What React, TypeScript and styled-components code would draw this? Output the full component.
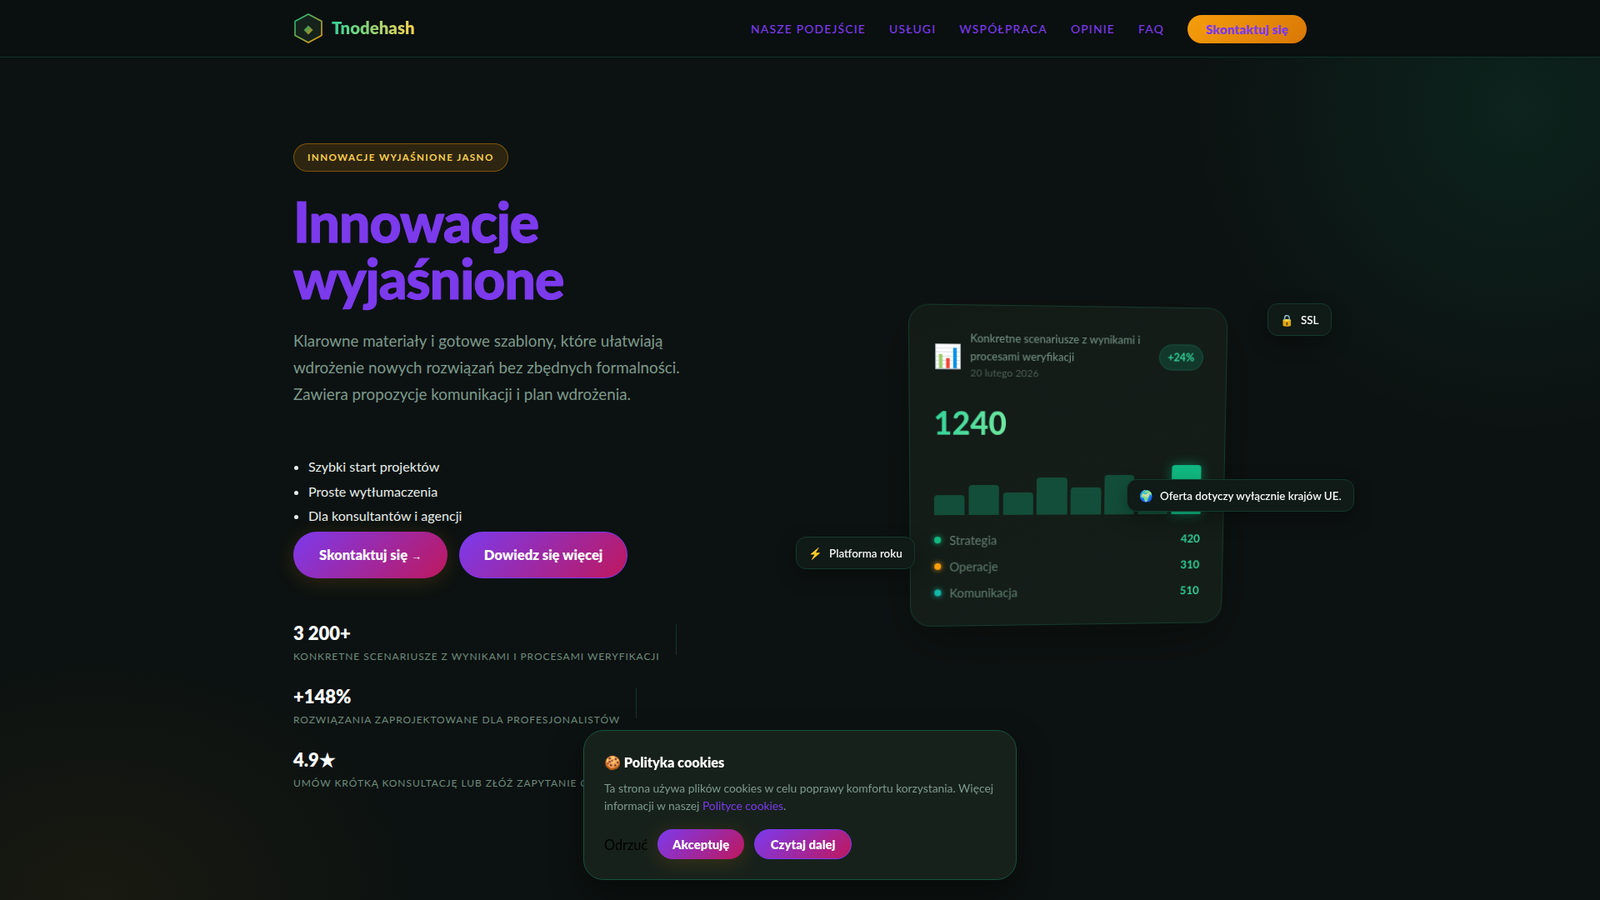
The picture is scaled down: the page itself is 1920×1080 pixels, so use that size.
import React from 'react';
import styled, { createGlobalStyle } from 'styled-components';

const GlobalStyle = createGlobalStyle`
  * { box-sizing: border-box; }
  html, body { margin: 0; padding: 0; }
  body {
    height: 1080px;
    overflow: hidden;
    background: #0b1110;
    font-family: 'Lato', 'Noto Sans', sans-serif;
    color: #f4f7f5;
  }
`;

const Page = styled.div`
  position: relative;
  height: 1080px;
  overflow: hidden;
  background:
    radial-gradient(560px 560px at 1820px 130px, rgba(16, 185, 129, 0.1), transparent 70%),
    radial-gradient(560px 420px at 6% 100%, rgba(245, 158, 11, 0.055), transparent 70%),
    #0c1211;
`;

const Header = styled.header`
  height: 69px;
  background: #0a0f0f;
  border-bottom: 1px solid #0f3327;
`;

const Inner = styled.div`
  width: 1216px;
  margin: 0 auto;
`;

const HeaderInner = styled(Inner)`
  height: 68px;
  display: flex;
  align-items: center;
  justify-content: space-between;
`;

const Brand = styled.a`
  display: flex;
  align-items: center;
  gap: 10px;
`;

const BrandName = styled.span`
  margin-top: -3px;
  font-size: 20.4px;
  font-weight: 800;
  background: linear-gradient(90deg, #34d399, #fcd34d);
  -webkit-background-clip: text;
  background-clip: text;
  color: transparent;
`;

const Nav = styled.nav`
  display: flex;
  align-items: center;
  gap: 28px;
`;

const NavLink = styled.a`
  color: #7c3aed;
  font-size: 13.9px;
  font-weight: 500;
  letter-spacing: 0.085em;
  text-transform: uppercase;
`;

const NavButton = styled.a`
  display: block;
  width: 143px;
  height: 34px;
  margin-top: 2px;
  line-height: 34px;
  text-align: center;
  border-radius: 17px;
  background: linear-gradient(135deg, #f59e0b, #d97706);
  color: #7c3aed;
  font-size: 15.2px;
  font-weight: 800;
  letter-spacing: 0.01em;
`;

const Hero = styled(Inner)`
  display: grid;
  grid-template-columns: 1fr 1fr;
  column-gap: 64px;
  padding-top: 103px;
`;

const Copy = styled.div`
  display: flex;
  flex-direction: column;
  align-items: flex-start;
`;

const Eyebrow = styled.span`
  display: block;
  height: 34px;
  line-height: 32px;
  padding: 0 16px;
  border: 1px solid rgba(245, 158, 11, 0.4);
  border-radius: 17px;
  background: rgba(245, 158, 11, 0.14);
  color: #fbcf4c;
  font-size: 11.6px;
  font-weight: 700;
  letter-spacing: 0.12em;
`;

const Title = styled.h1`
  margin: 26px 0 0;
  color: #7c3aed;
  font-size: 66px;
  font-weight: 900;
  line-height: 68px;
  letter-spacing: -0.015em;
  -webkit-text-stroke: 1.2px #7c3aed;
`;

const Lead = styled.p`
  margin: 25px 0 0;
  width: 480px;
  color: #7d9a8c;
  font-size: 18.8px;
  line-height: 32px;
`;

const Bullets = styled.ul`
  margin: 56px 0 0;
  padding: 0 0 0 18px;
  color: #e8efea;
  font-size: 16.1px;
  line-height: 29.5px;
`;

const Actions = styled.div`
  display: flex;
  gap: 14px;
  margin-top: 4px;
`;

const ActionButton = styled.a<{ $wide?: boolean; $glow?: boolean }>`
  display: block;
  width: ${(p) => (p.$wide ? '202px' : '185px')};
  height: 56px;
  line-height: 56px;
  text-align: center;
  border-radius: 28px;
  background: linear-gradient(135deg, #7c3aed, #be185d);
  color: #fff;
  font-size: 16.6px;
  font-weight: 800;
  ${(p) => p.$glow && 'box-shadow: 0 4px 24px rgba(245, 158, 11, 0.16);'}
  ${(p) => p.$wide && 'border: 1px solid #7c3aed; line-height: 54px;'}
`;

const Arrow = styled.span`
  font-family: 'Liberation Sans', sans-serif;
  font-size: 13px;
  font-weight: 400;
`;

const Stats = styled.div`
  display: flex;
  flex-direction: column;
  align-items: flex-start;
  gap: 26px;
  margin-top: 52px;
`;

const Stat = styled.div`
  position: relative;
  padding-right: 20px;

  &::after {
    content: '';
    position: absolute;
    right: 0;
    top: 3px;
    height: 37px;
    width: 1px;
    background: #14352a;
  }
`;

const StatValue = styled.div`
  font-size: 22px;
  font-weight: 800;
  line-height: 28px;
  color: #fff;
`;

const StatLabel = styled.div`
  margin-top: 5px;
  color: #6f8c7e;
  font-size: 12px;
  line-height: 17px;
  letter-spacing: 0.078em;
  text-transform: uppercase;
  white-space: nowrap;
`;

const Visual = styled.div`
  position: relative;
  height: 700px;
  display: flex;
  justify-content: center;
  padding-top: 197px;
`;

const Card = styled.div`
  width: 380px;
  height: 384px;
  margin-left: 6px;
  padding: 28px 28px 0;
  border: 1px solid #153a2d;
  border-radius: 24px;
  background: linear-gradient(160deg, #131b17, #141e19);
  box-shadow: 0 20px 60px rgba(0, 0, 0, 0.3);
  transform: perspective(1200px) rotateY(5deg) rotateX(-5deg);
`;

const CardHead = styled.div`
  display: flex;
  align-items: center;
  gap: 9px;
`;

const CardIcon = styled.span`
  font-size: 27px;
  line-height: 1;
`;

const CardText = styled.div`
  flex: 1;
`;

const CardTitle = styled.div`
  color: #6f8c7e;
  font-size: 13px;
  font-weight: 500;
  line-height: 20.5px;
`;

const CardDate = styled.div`
  color: #4a5f54;
  font-size: 12px;
  line-height: 20px;
`;

const Trend = styled.span`
  padding: 0 10px;
  height: 31px;
  line-height: 29px;
  border: 1px solid #175240;
  border-radius: 16px;
  background: #12382c;
  color: #34d399;
  font-size: 12.6px;
  font-weight: 700;
`;

const BigNumber = styled.div`
  margin-top: 26px;
  font-size: 37px;
  font-weight: 900;
  line-height: 46px;
  background: linear-gradient(90deg, #34d399, #6ee7a0);
  -webkit-background-clip: text;
  background-clip: text;
  color: transparent;
  display: inline-block;
`;

const Bars = styled.div`
  display: flex;
  align-items: flex-end;
  gap: 4.5px;
  height: 62px;
  margin-top: 25px;
`;

const Bar = styled.div<{ $accent?: boolean }>`
  flex: 1;
  border-radius: 4px 4px 0 0;
  background: ${(p) => (p.$accent ? '#10b981' : '#134e3a')};
  ${(p) => p.$accent && 'box-shadow: 0 0 14px rgba(16, 185, 129, 0.5);'}
`;

const Rows = styled.div`
  margin-top: 14px;
`;

const Row = styled.div`
  display: flex;
  align-items: center;
  height: 32px;
  gap: 10px;
`;

const Dot = styled.span<{ $color: string }>`
  width: 8px;
  height: 8px;
  border-radius: 50%;
  background: ${(p) => p.$color};
  box-shadow: 0 0 6px ${(p) => p.$color};
`;

const RowLabel = styled.span`
  flex: 1;
  color: #637f71;
  font-size: 14.6px;
`;

const RowValue = styled.span`
  color: #34d399;
  font-size: 13.6px;
  font-weight: 700;
`;

const Chip = styled.div<{ $top: number; $left: number }>`
  position: absolute;
  top: ${(p) => p.$top}px;
  left: ${(p) => p.$left}px;
  display: flex;
  align-items: center;
  gap: 8px;
  height: 39px;
  padding: 0 14px;
  border: 1px solid #153a2d;
  border-radius: 12px;
  background: #101a16;
  color: #f4f7f5;
  font-size: 13.4px;
  font-weight: 600;
  white-space: nowrap;
  box-shadow: 0 8px 24px rgba(0, 0, 0, 0.3);
`;

const CookieBox = styled.aside`
  position: absolute;
  left: 700px;
  bottom: 24px;
  width: 520px;
  height: 180px;
  padding: 25px 24px 24px;
  border: 1px solid #175240;
  border-radius: 24px;
  background: #17211b;
  box-shadow: 0 16px 40px rgba(0, 0, 0, 0.4);
`;

const CookieTitle = styled.div`
  font-size: 16.3px;
  font-weight: 800;
  line-height: 26px;
  color: #fff;
`;

const CookieText = styled.p`
  margin: 7px 0 0;
  color: #7d9a8c;
  font-size: 13.8px;
  line-height: 21px;
`;

const CookieLink = styled.a`
  color: #7c3aed;
`;

const CookieActions = styled.div`
  display: flex;
  align-items: center;
  gap: 12px;
  margin-top: 18px;
`;

const DeclineButton = styled.span`
  color: #000;
  font-size: 16.3px;
`;

const CookieButton = styled.a<{ $wide?: boolean }>`
  display: block;
  width: ${(p) => (p.$wide ? '117px' : '104px')};
  height: 36px;
  line-height: 36px;
  text-align: center;
  border-radius: 18px;
  background: linear-gradient(135deg, #7c3aed, #be185d);
  color: #fff;
  font-size: 14.9px;
  font-weight: 800;
  ${(p) => !p.$wide && 'box-shadow: 0 4px 24px rgba(245, 158, 11, 0.16);'}
  ${(p) => p.$wide && 'border: 1px solid #7c3aed; line-height: 34px;'}
`;

const navItems = ['Nasze podejście', 'Usługi', 'Współpraca', 'Opinie', 'FAQ'];
const barHeights = [24, 36, 27, 45, 33, 48, 30];
const rows = [
  { label: 'Strategia', value: 420, color: '#10b981' },
  { label: 'Operacje', value: 310, color: '#f59e0b' },
  { label: 'Komunikacja', value: 510, color: '#14b8a6' },
];
const stats = [
  { value: '3 200+', label: 'Konkretne scenariusze z wynikami i procesami weryfikacji' },
  { value: '+148%', label: 'Rozwiązania zaprojektowane dla profesjonalistów' },
  { value: '4.9★', label: 'Umów krótką konsultację lub złóż zapytanie ofertowe' },
];

const Logo = () => (
  <svg width="36" height="36" viewBox="0 0 36 36" fill="none">
    <defs>
      <linearGradient id="hex" x1="0" y1="0" x2="1" y2="1">
        <stop offset="0" stopColor="#10b981" />
        <stop offset="1" stopColor="#f59e0b" />
      </linearGradient>
    </defs>
    <path d="M18 1 L34 9.5 V26.5 L18 35 L2 26.5 V9.5 Z" fill="#15231c" stroke="url(#hex)" strokeWidth="1.6" />
    <path d="M18 14.5 L23.5 20 L18 25.5 L12.5 20 Z" fill="url(#hex)" opacity="0.85" />
  </svg>
);

const App: React.FC = () => (
  <Page>
    <GlobalStyle />
    <Header>
      <HeaderInner>
        <Brand>
          <Logo />
          <BrandName>Tnodehash</BrandName>
        </Brand>
        <Nav>
          {navItems.map((item) => (
            <NavLink key={item}>{item}</NavLink>
          ))}
          <NavButton>Skontaktuj się</NavButton>
        </Nav>
      </HeaderInner>
    </Header>
    <Hero>
      <Copy>
        <Eyebrow>INNOWACJE WYJAŚNIONE JASNO</Eyebrow>
        <Title>
          Innowacje
          <br />
          wyjaśnione
        </Title>
        <Lead>
          Klarowne materiały i gotowe szablony, które ułatwiają wdrożenie nowych rozwiązań bez zbędnych
          formalności. Zawiera propozycje komunikacji i plan wdrożenia.
        </Lead>
        <Bullets>
          <li>Szybki start projektów</li>
          <li>Proste wytłumaczenia</li>
          <li>Dla konsultantów i agencji</li>
        </Bullets>
        <Actions>
          <ActionButton $glow>
            Skontaktuj się <Arrow>→</Arrow>
          </ActionButton>
          <ActionButton $wide>Dowiedz się więcej</ActionButton>
        </Actions>
        <Stats>
          {stats.map((stat) => (
            <Stat key={stat.value}>
              <StatValue>{stat.value}</StatValue>
              <StatLabel>{stat.label}</StatLabel>
            </Stat>
          ))}
        </Stats>
      </Copy>
      <Visual>
        <Card>
          <CardHead>
            <CardIcon>📊</CardIcon>
            <CardText>
              <CardTitle>Konkretne scenariusze z wynikami i procesami weryfikacji</CardTitle>
              <CardDate>20 lutego 2026</CardDate>
            </CardText>
            <Trend>+24%</Trend>
          </CardHead>
          <BigNumber>1240</BigNumber>
          <Bars>
            {barHeights.map((h, i) => (
              <Bar key={i} style={{ height: h }} />
            ))}
            <Bar $accent style={{ height: 60 }} />
          </Bars>
          <Rows>
            {rows.map((row) => (
              <Row key={row.label}>
                <Dot $color={row.color} />
                <RowLabel>{row.label}</RowLabel>
                <RowValue>{row.value}</RowValue>
              </Row>
            ))}
          </Rows>
        </Card>
        <Chip $top={192} $left={529}>
          <span>🔒</span>
          <span>SSL</span>
        </Chip>
        <Chip $top={403} $left={360}>
          <span>🌍</span>
          <span>Oferta dotyczy wyłącznie krajów UE.</span>
        </Chip>
        <Chip $top={472} $left={-37}>
          <span>⚡</span>
          <span>Platforma roku</span>
        </Chip>
      </Visual>
    </Hero>
    <CookieBox>
      <CookieTitle>🍪 Polityka cookies</CookieTitle>
      <CookieText>
        Ta strona używa plików cookies w celu poprawy komfortu korzystania. Więcej informacji w naszej{' '}
        <CookieLink>Polityce cookies</CookieLink>.
      </CookieText>
      <CookieActions>
        <DeclineButton>Odrzuć</DeclineButton>
        <CookieButton>Akceptuję</CookieButton>
        <CookieButton $wide>Czytaj dalej</CookieButton>
      </CookieActions>
    </CookieBox>
  </Page>
);

export default App;
